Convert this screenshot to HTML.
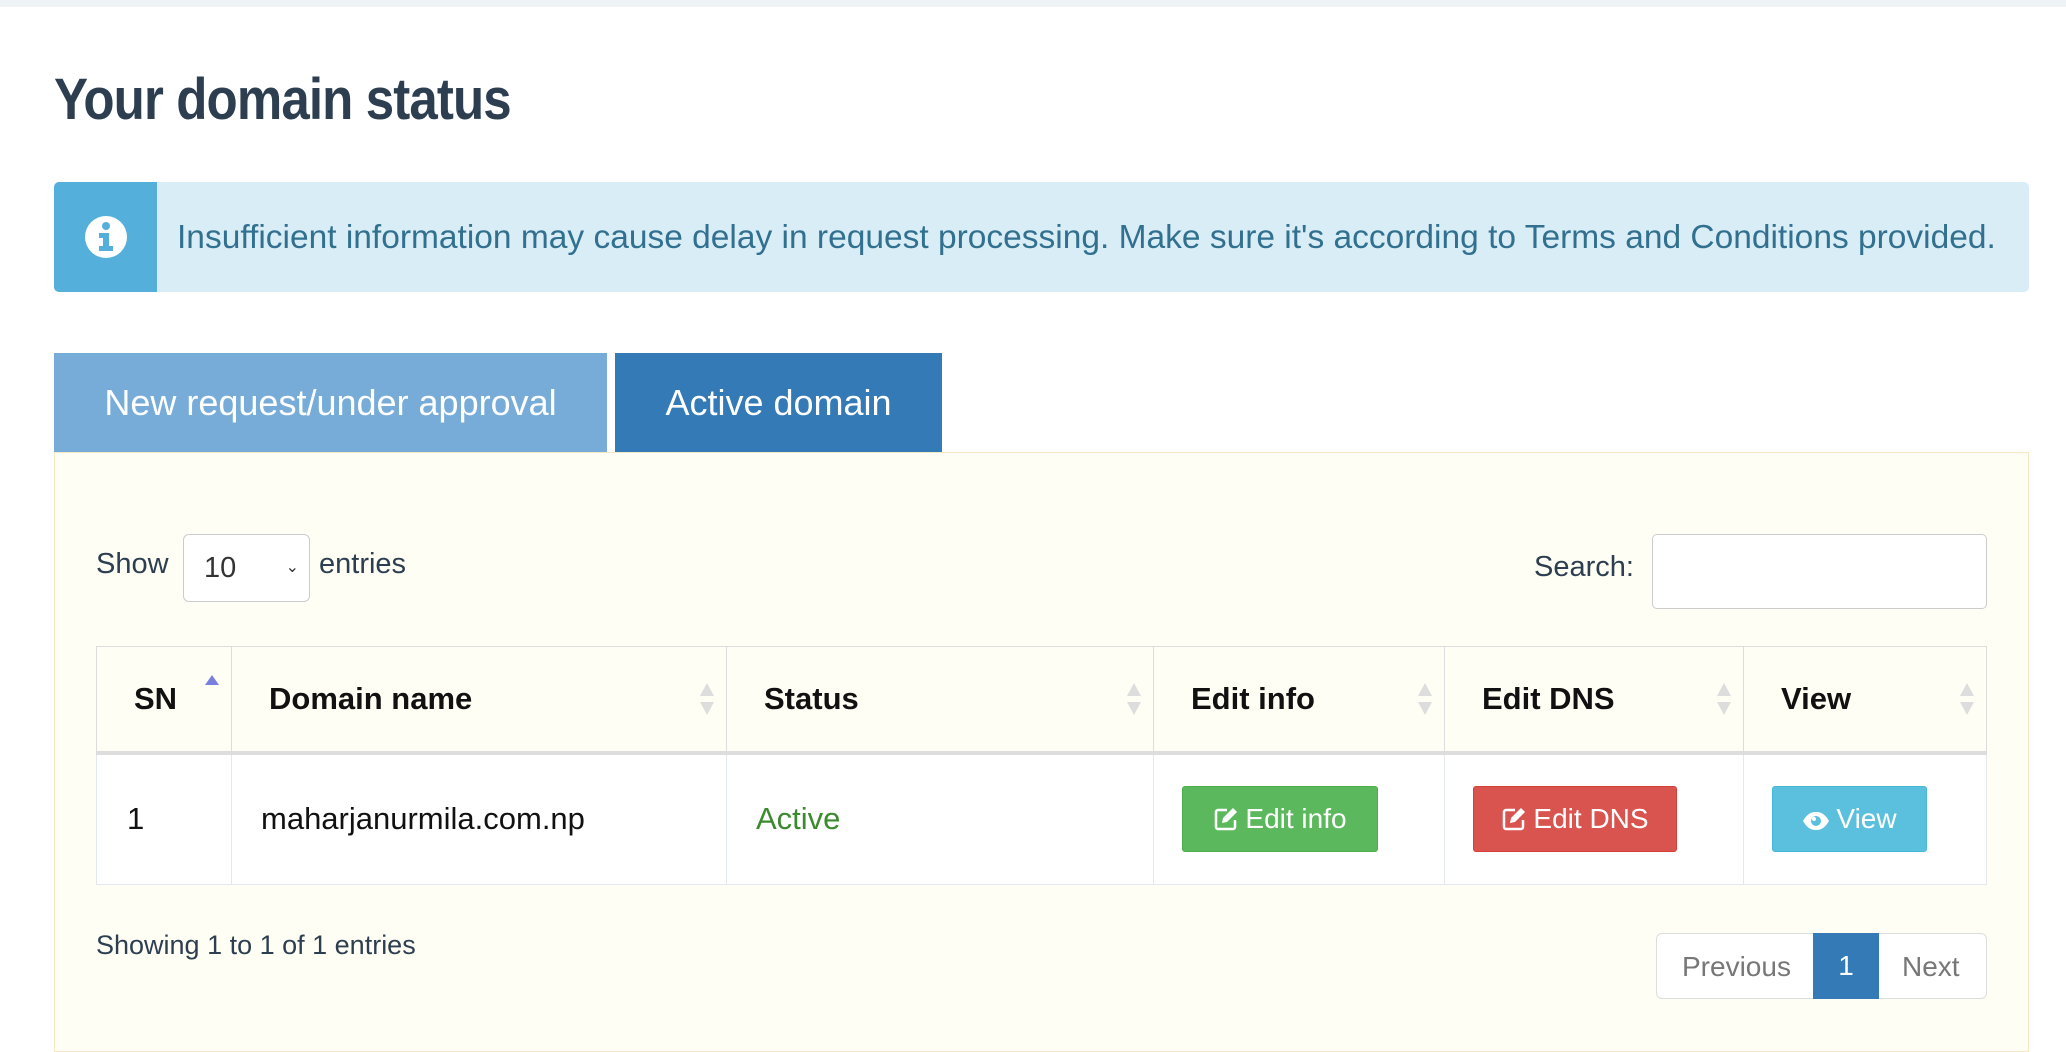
<!DOCTYPE html>
<html><head><meta charset="utf-8"><style>
*{box-sizing:border-box;margin:0;padding:0}
body{width:2066px;height:1022px;background:#fff;font-family:"Liberation Sans",sans-serif;position:relative;overflow:hidden;color:#2c3e50}
.a{position:absolute}
.topbar{left:0;top:0;width:2066px;height:7px;background:#eef3f6}
h1{position:absolute;left:54px;top:66px;font-size:58px;font-weight:bold;color:#2c3e50;transform:scaleX(0.88);transform-origin:left top;white-space:nowrap;letter-spacing:-1px}
.alert{left:54px;top:182px;width:1975px;height:110px;background:#d9edf7;border-radius:5px;overflow:hidden}
.alert .ic{position:absolute;left:0;top:0;width:103px;height:110px;background:#55afdb}
.alert .tx{position:absolute;left:123px;top:37px;font-size:33.5px;color:#31708f;white-space:nowrap}
.tab{top:353px;height:99px;color:#fff;font-size:36px;line-height:99px;text-align:center;white-space:nowrap}
.panel{left:54px;top:452px;width:1975px;height:600px;background:#fffef4;border:1px solid #f5e8c4}
.lbl{font-size:29px;color:#2c3e50}
.sel{left:183px;top:534px;width:127px;height:68px;border:1px solid #ccc;border-radius:6px;background:#fff;font-size:29px;line-height:66px;padding-left:20px;color:#333}
.inp{left:1652px;top:534px;width:335px;height:75px;border:1px solid #ccc;border-radius:5px;background:#fff}
table{position:absolute;left:96px;top:646px;width:1891px;border-collapse:collapse}
th,td{border:1px solid #ddd;text-align:left;white-space:nowrap}
th{height:106px;font-size:31px;font-weight:bold;color:#111;padding-left:37px;border-bottom:4px solid #ddd;position:relative}
td{height:132px;background:#fff;font-size:31px;color:#111;padding-left:28px;border-color:#e3e8ec}
.sort{position:absolute;right:12px;top:36px;width:14px;height:32px}
.btn{display:inline-block;height:66px;line-height:64px;color:#fff;font-size:28px;border-radius:3px;text-align:center}
.btn svg{vertical-align:-4px;margin-right:6px}
.pg{left:1656px;top:933px;width:331px;height:66px;border:1px solid #ddd;border-radius:6px;background:#fff;font-size:28px;color:#777}
</style></head><body>
<div class="a topbar"></div>
<h1>Your domain status</h1>
<div class="a alert"><div class="ic"><svg width="103" height="110" viewBox="0 0 103 110"><circle cx="52" cy="55" r="21" fill="#fff"/><circle cx="52" cy="44" r="4" fill="#55afdb"/><path d="M45 51h10v13h4v5H45v-5h4v-8h-4z" fill="#55afdb"/></svg></div>
<div class="tx">Insufficient information may cause delay in request processing. Make sure it's according to Terms and Conditions provided.</div></div>
<div class="a panel"></div>
<div class="a tab" style="left:54px;width:553px;background:#77acd9">New request/under approval</div>
<div class="a tab" style="left:615px;width:327px;background:#337ab7">Active domain</div>
<div class="a lbl" style="left:96px;top:548px">Show</div>
<div class="a sel">10<span style="position:absolute;right:10px;top:0;font-size:16px">&#8964;</span></div>
<div class="a lbl" style="left:319px;top:548px">entries</div>
<div class="a lbl" style="left:1534px;top:551px">Search:</div>
<div class="a inp"></div>
<table>
<tr>
<th style="width:135px;padding-left:37px">SN<svg class="sort" style="top:28px" viewBox="0 0 14 32"><path d="M7 0L14 10H0z" fill="#7a7ee0"/></svg></th>
<th style="width:495px">Domain name<svg class="sort" viewBox="0 0 14 32"><path d="M7 0L14 13H0zM7 32L14 19H0z" fill="#ddd"/></svg></th>
<th style="width:427px">Status<svg class="sort" viewBox="0 0 14 32"><path d="M7 0L14 13H0zM7 32L14 19H0z" fill="#ddd"/></svg></th>
<th style="width:291px">Edit info<svg class="sort" viewBox="0 0 14 32"><path d="M7 0L14 13H0zM7 32L14 19H0z" fill="#ddd"/></svg></th>
<th style="width:299px">Edit DNS<svg class="sort" viewBox="0 0 14 32"><path d="M7 0L14 13H0zM7 32L14 19H0z" fill="#ddd"/></svg></th>
<th>View<svg class="sort" viewBox="0 0 14 32"><path d="M7 0L14 13H0zM7 32L14 19H0z" fill="#ddd"/></svg></th>
</tr>
<tr>
<td style="padding-left:30px">1</td>
<td style="padding-left:29px">maharjanurmila.com.np</td>
<td style="padding-left:29px;color:#3c8a2e">Active</td>
<td><span class="btn" style="width:196px;background:#5cb85c;border:1px solid #4cae4c"><svg width="26" height="26" viewBox="0 0 26 26"><path d="M14 4H5a2 2 0 0 0-2 2v15a2 2 0 0 0 2 2h15a2 2 0 0 0 2-2v-7" fill="none" stroke="#fff" stroke-width="2.5"/><path d="M20 2l4 4-10 10-5 1 1-5z" fill="#fff"/></svg>Edit info</span></td>
<td><span class="btn" style="width:204px;background:#d9534f;border:1px solid #d43f3a"><svg width="26" height="26" viewBox="0 0 26 26"><path d="M14 4H5a2 2 0 0 0-2 2v15a2 2 0 0 0 2 2h15a2 2 0 0 0 2-2v-7" fill="none" stroke="#fff" stroke-width="2.5"/><path d="M20 2l4 4-10 10-5 1 1-5z" fill="#fff"/></svg>Edit DNS</span></td>
<td><span class="btn" style="width:155px;background:#5bc0de;border:1px solid #46b8da"><svg width="28" height="22" viewBox="0 0 28 22"><path d="M1 11C5 4 9 2 14 2s9 2 13 9c-4 7-8 9-13 9S5 18 1 11z" fill="#fff"/><circle cx="14" cy="11" r="5" fill="#5bc0de"/><circle cx="12" cy="9" r="2" fill="#fff"/></svg>View</span></td>
</tr>
</table>
<div class="a" style="left:96px;top:930px;font-size:27px;color:#2c3e50">Showing 1 to 1 of 1 entries</div>
<div class="a pg"><span class="a" style="left:25px;top:17px">Previous</span><span class="a" style="left:156px;top:-1px;width:66px;height:66px;background:#337ab7;color:#fff;text-align:center;line-height:66px">1</span><span class="a" style="left:245px;top:17px">Next</span></div>
</body></html>
